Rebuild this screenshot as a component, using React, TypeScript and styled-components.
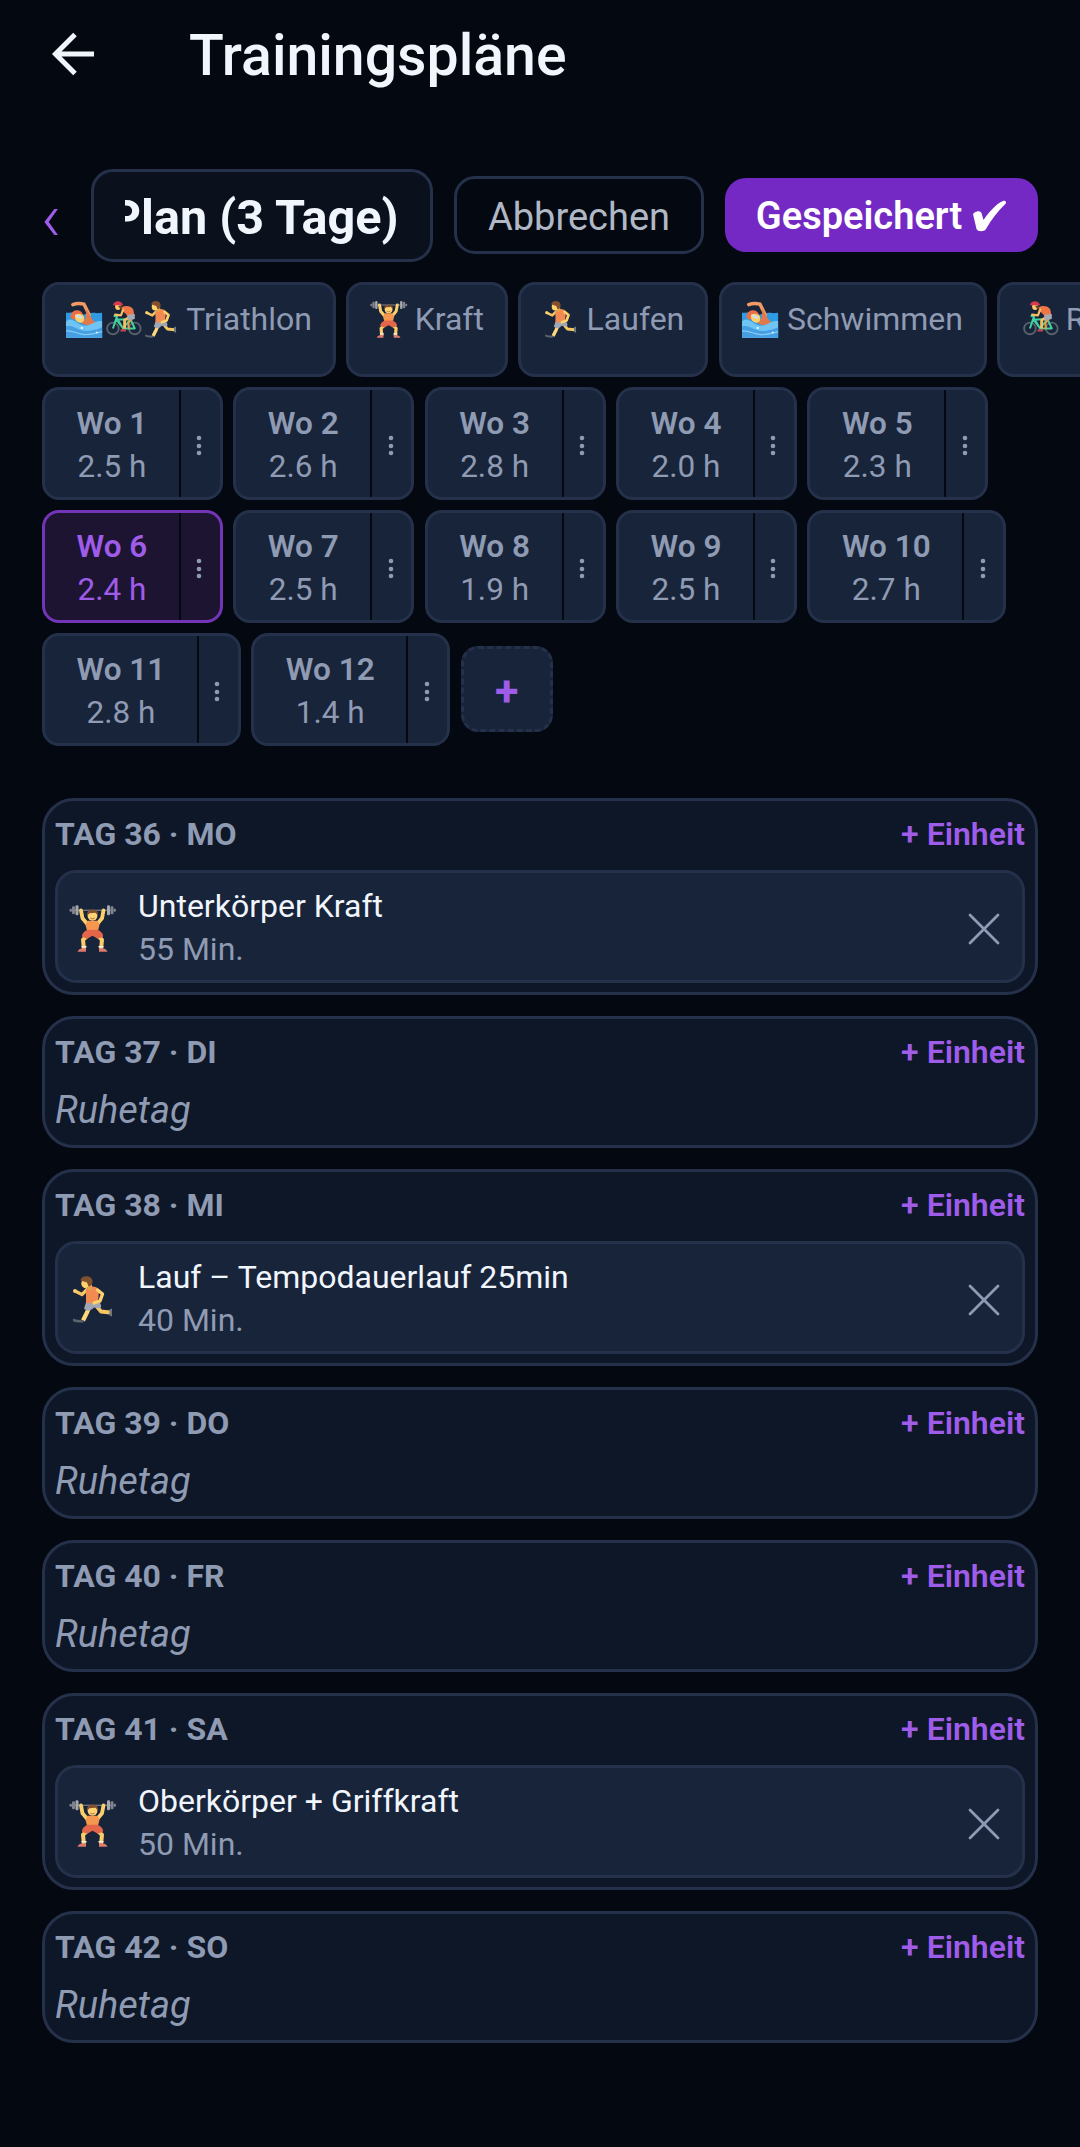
import React from "react";
import styled, { createGlobalStyle } from "styled-components";

const color = {
  page: "#040810",
  panel: "#0d1727",
  raised: "#18243a",
  line: "#25314a",
  muted: "#8f9ab3",
  text: "#f1f5fc",
  accent: "#9f5ce9",
  primary: "#7429c4",
};

const GlobalStyle = createGlobalStyle`
  *, *::before, *::after { box-sizing: border-box; }
  html, body { margin: 0; background: ${color.page}; }
  body { font-family: Roboto, "Noto Sans", sans-serif; color: ${color.text}; overflow-x: hidden; }
  button { font: inherit; color: inherit; margin: 0; padding: 0; border: 0; background: none; }
`;

const Screen = styled.main`
  width: 1080px;
  height: 2147px;
  overflow: hidden;
  background: ${color.page};
`;

const AppBar = styled.header`
  display: flex;
  align-items: center;
  height: 112px;
  padding-left: 51px;
`;

const BackButton = styled.button`
  display: flex;
  width: 44px;
  height: 44px;
  margin: 0 94px 4px 0;
`;

const Title = styled.h1`
  margin: 0;
  font-size: 57.2px;
  font-weight: 500;
  line-height: 66px;
`;

const Content = styled.div`
  display: flex;
  flex-direction: column;
  padding: 57px 42px 0;
`;

const EditBar = styled.div`
  display: flex;
  align-items: center;
  gap: 21px;
  height: 93px;
`;

const PrevButton = styled.button`
  width: 28px;
  height: 62px;
  padding: 4px 12px 0 0;
  font-size: 68px;
  font-weight: 300;
  line-height: 58px;
  text-indent: -1px;
  color: ${color.accent};
  text-align: left;
`;

const NameField = styled.div`
  display: flex;
  flex: none;
  width: 342px;
  height: 93px;
  padding: 0 31.5px 0 30.5px;
  border: 3px solid ${color.line};
  border-radius: 22px;
  background: #0a101c;
`;

const NameText = styled.div`
  display: flex;
  justify-content: flex-end;
  width: 100%;
  overflow: hidden;
  white-space: nowrap;
  font-size: 48.6px;
  font-weight: 700;
  line-height: 91px;
`;

const ActionButton = styled.button<{ $primary?: boolean }>`
  display: flex;
  align-items: center;
  justify-content: center;
  flex: none;
  gap: 10px;
  width: ${(p) => (p.$primary ? 313 : 250)}px;
  height: ${(p) => (p.$primary ? 74 : 78)}px;
  margin-bottom: 2px;
  padding-top: ${(p) => (p.$primary ? 3 : 5)}px;
  border: ${(p) => (p.$primary ? "0" : `3px solid ${color.line}`)};
  border-radius: 21px;
  background: ${(p) => (p.$primary ? color.primary : "transparent")};
  color: ${(p) => (p.$primary ? "#fff" : "#b0b8c6")};
  font-size: 38px;
  font-weight: ${(p) => (p.$primary ? 600 : 400)};
  white-space: nowrap;
`;

const SportStrip = styled.div`
  display: flex;
  gap: 10.5px;
  height: 95px;
  margin: 20px -42px 10px 0;
  overflow: hidden;
`;

const SportChip = styled.button`
  display: flex;
  flex: none;
  align-items: flex-start;
  padding: 15px 21px 15px 20.5px;
  border: 3px solid ${color.line};
  border-radius: 17px;
  background: ${color.raised};
  color: ${color.muted};
  font-size: 32px;
  line-height: 38px;
`;

const ChipLabel = styled.span`
  margin-left: 6.7px;
`;

const Emoji = styled.svg<{ $size: number }>`
  flex: none;
  width: ${(p) => p.$size}px;
  height: ${(p) => p.$size}px;
`;

const WeekGrid = styled.div`
  display: flex;
  flex-wrap: wrap;
  align-items: center;
  gap: 10.5px;
`;

const WeekTile = styled.div<{ $active?: boolean }>`
  display: flex;
  height: 112.5px;
  border: 3px solid ${(p) => (p.$active ? "#7434b8" : color.line)};
  border-radius: 17px;
  background: ${(p) => (p.$active ? "#1d1431" : color.raised)};
  color: ${(p) => (p.$active ? color.accent : color.muted)};
`;

const WeekInfo = styled.div`
  display: flex;
  flex-direction: column;
  align-items: center;
  padding: 11.5px 31.5px 0;
  font-size: 31.5px;
  line-height: 43px;
`;

const WeekName = styled.strong`
  font-weight: 600;
`;

const WeekMenu = styled.button`
  display: flex;
  align-items: center;
  justify-content: center;
  width: 41px;
  padding: 3px 2px 0 0;
  border-left: 2px solid ${color.page};
`;

const AddWeek = styled.button`
  width: 92px;
  height: 86px;
  padding-top: 5px;
  border: 3px dashed ${color.line};
  border-radius: 17px;
  background: ${color.raised};
  color: ${color.accent};
  font-size: 43px;
  font-weight: 700;
  line-height: 75px;
`;

const DayList = styled.section`
  display: flex;
  flex-direction: column;
  gap: 21.5px;
  margin-top: 52.500px;
`;

const DayCard = styled.article<{ $rest?: boolean }>`
  height: ${(p) => (p.$rest ? 131.5 : 196.5)}px;
  padding: 10px;
  border: 3px solid ${color.line};
  border-radius: 32px;
  background: ${color.panel};
`;

const DayHead = styled.div`
  display: flex;
  justify-content: space-between;
  height: 59px;
  font-size: 32px;
  line-height: 47px;
`;

const DayName = styled.h2`
  margin: 0;
  font-size: inherit;
  font-weight: 700;
  color: ${color.muted};
`;

const AddUnit = styled.button`
  align-self: flex-start;
  font-weight: 600;
  color: ${color.accent};
`;

const RestLabel = styled.p`
  margin: 0;
  font-size: 38px;
  font-style: italic;
  line-height: 44px;
  color: ${color.muted};
`;

const Workout = styled.div`
  display: flex;
  align-items: center;
  height: 113px;
  padding: 2px 22px 0 11px;
  border: 3px solid ${color.line};
  border-radius: 21px;
  background: ${color.raised};
`;

const WorkoutText = styled.div`
  flex: 1;
  margin-left: 21px;
  font-size: 32px;
  line-height: 43px;
  color: ${color.text};
`;

const Duration = styled.div`
  color: ${color.muted};
`;

const RemoveButton = styled.button`
  display: flex;
  padding-top: 3px;
`;

type Sport = "swim" | "bike" | "run" | "lift";

const Swimmer = () => (
  <g transform="translate(0 2) scale(0.95)">
    <path d="M0 15c4 0 7-1 11 0s8 3 14 2 8-3 13-2 7 0 10 0v33H0z" fill="#2f9be2" />
    <path d="M9 4c5-2 10-2 15-.5L31 18" fill="none" stroke="#f29a62" strokeWidth="4.600" strokeLinejoin="round" strokeLinecap="round" />
    <path d="M27 10l9 15 5 3-9 4-12-3 6-7z" fill="#e07a4c" />
    <path d="M6 21c0-6 4-10 9-9.500 5 .3 8 4 8 9L9 24z" fill="#ea6e47" />
    <path d="M12 18c4-3 9-2 12 2 1 5-1 8-5 8-5 0-8-4-7-10z" fill="#ffd06a" />
    <path d="M13 17l9 3-1 3-8-3z" fill="#c8e2ef" />
    <path d="M0 26c6-4 9-2 15 2s12 5 18 2 9-5 15-4v22H0z" fill="#6fc4f3" />
    <path d="M0 33c8-2 13 3 20 5s17 1 28-4v14H0z" fill="#459fe2" />
    <path d="M0 39c9-1 17 5 25 5s16-2 23-4" stroke="#86cdf5" strokeWidth="1.500" fill="none" />
    <circle cx="21" cy="35" r="1.600" fill="#e5f7ff" />
    <circle cx="41" cy="41" r="1.300" fill="#e5f7ff" />
  </g>
);

const Cyclist = () => (
  <g transform="translate(3 1) scale(0.92)">
    <g fill="none" stroke="#59616b" strokeWidth="2.600">
      <circle cx="9" cy="38" r="8" />
      <circle cx="39" cy="38" r="8" />
    </g>
    <path d="M9 38l5-15 9 15 10-13 6 13H23L14 26l19-1M10 21h6" fill="none" stroke="#3fd3a2" strokeWidth="2.700" strokeLinejoin="round" />
    <path d="M33 22l-8 4.500L25 38" fill="none" stroke="#f7c05e" strokeWidth="3.800" strokeLinejoin="round" />
    <path d="M35 24l-5 7 1 8" fill="none" stroke="#e3a04b" strokeWidth="3" />
    <path d="M20 39h7v3h-8z" fill="#c9434c" />
    <path d="M21 9c5-3 13-2 16 3l1.500 9-9 2c-1-4-4-7-8.500-9z" fill="#ee7748" />
    <path d="M29 19l10-1v7l-10 2z" fill="#a6aab5" />
    <path d="M23 12l-3 8-8-1" fill="none" stroke="#f8bd63" strokeWidth="3" strokeLinejoin="round" strokeLinecap="round" />
    <ellipse cx="16" cy="8" rx="4" ry="4.600" fill="#ffc968" />
    <path d="M16 7l5-1 1 6-3-1z" fill="#6b432b" />
    <path d="M9 6C10-1 21-1.500 23 6z" fill="#d6384f" />
  </g>
);

const Runner = () => (
  <g transform="translate(0 0.5)">
    <path d="M27 30l5 6 9 1" fill="none" stroke="#f6c665" strokeWidth="3.800" strokeLinejoin="round" />
    <path d="M40.500 34l2.500-1v8l-2.500-1z" fill="#6f7783" />
    <path d="M21 30l-3 7-4 8" fill="none" stroke="#ffd878" strokeWidth="4.200" strokeLinejoin="round" />
    <path d="M17 27l13-1c2.500 3 2.500 5 1.500 7l-6.500-1c-4 4-7 4-10 1z" fill="#a0a5b3" />
    <path d="M4 43l3 1 8 1-1 2c-5 .2-8-.6-10-1.300z" fill="#5c6470" />
    <path d="M19 13l-6 6-6-3" fill="none" stroke="#f6c463" strokeWidth="3.200" strokeLinejoin="round" />
    <path d="M17 14c3-4 10-4 13 0l-1 14-12-.5z" fill="#f28b52" />
    <path d="M28.500 14.500l5 4-2.500 7-6 2" fill="none" stroke="#ffd06e" strokeWidth="3.400" strokeLinejoin="round" strokeLinecap="round" />
    <circle cx="6" cy="15.500" r="2" fill="#ffd06e" />
    <path d="M18 10l5-1v5l-4 1z" fill="#e4a44c" />
    <ellipse cx="16.500" cy="8" rx="4.200" ry="4.700" fill="#ffd06e" />
    <path d="M11.500 5C12-.5 22.500-1 23.500 5c.3 4-2 6-4 6L18 7z" fill="#80512f" />
  </g>
);

const Lifter = () => (
  <g transform="translate(0.5 0.800)">
    <path d="M5 5.500h37" stroke="#8d929b" strokeWidth="1.100" />
    <g fill="#7f838c">
      <rect x="0" y="4" width="2.500" height="3" rx="1" />
      <rect x="2.500" y="1.500" width="3" height="8" rx="1.200" />
      <rect x="6" y="0.500" width="3" height="10" rx="1.200" fill="#a5a8af" />
      <rect x="37.500" y="0.500" width="3" height="10" rx="1.200" fill="#a5a8af" />
      <rect x="41" y="1.500" width="3" height="8" rx="1.200" />
      <rect x="44" y="4" width="2.500" height="3" rx="1" />
    </g>
    <path d="M11.500 5.500l1.500 8 5 6M34 5.500l-1.500 8-5 6" fill="none" stroke="#fbd06c" strokeWidth="3.800" strokeLinejoin="round" strokeLinecap="round" />
    <path d="M18 31l-4.500 4 1 10M28 31l4.500 4-1 10" fill="none" stroke="#fbcd68" strokeWidth="4" strokeLinejoin="round" />
    <path d="M18 16h10l2 4-2 8H18l-2-8z" fill="#f5974f" />
    <path d="M18 25h10c4 2 6 4 5.500 7l-5 2-5.500-3-5.500 3-5-2c0-3 1.500-5 5.500-7z" fill="#e4664a" />
    <path d="M12 42h5M29 42h5" stroke="#f4efe9" strokeWidth="1.500" />
    <path d="M8 47c1-3 4-4 8.500-3.500V47zM38 47c-1-3-4-4-8.500-3.500V47z" fill="#de7a6b" />
    <circle cx="23" cy="11" r="4.900" fill="#ffd273" />
    <path d="M17.500 11C16 3 30 2.500 28.500 11L26 8l-6 .5z" fill="#80512f" />
    <path d="M20.800 13.300q2.200 1.700 4.400 0" fill="none" stroke="#b5652f" strokeWidth="0.900" />
  </g>
);

const drawings: Record<Sport, React.FC> = { swim: Swimmer, bike: Cyclist, run: Runner, lift: Lifter };

function SportIcon({ sport, size }: { sport: Sport; size: number }) {
  const Drawing = drawings[sport];
  return (
    <Emoji $size={size} viewBox="0 0 48 48" aria-hidden="true">
      <Drawing />
    </Emoji>
  );
}

const sports: { icons: Sport[]; label: string }[] = [
  { icons: ["swim", "bike", "run"], label: "Triathlon" },
  { icons: ["lift"], label: "Kraft" },
  { icons: ["run"], label: "Laufen" },
  { icons: ["swim"], label: "Schwimmen" },
  { icons: ["bike"], label: "Rad" },
];

const weekHours = ["2.5", "2.6", "2.8", "2.0", "2.3", "2.4", "2.5", "1.9", "2.5", "2.7", "2.8", "1.4"];
const activeWeek = 6;

type Day = { number: number; weekday: string; workout?: { sport: Sport; name: string; minutes: number } };

const days: Day[] = [
  { number: 36, weekday: "MO", workout: { sport: "lift", name: "Unterkörper Kraft", minutes: 55 } },
  { number: 37, weekday: "DI" },
  { number: 38, weekday: "MI", workout: { sport: "run", name: "Lauf – Tempodauerlauf 25min", minutes: 40 } },
  { number: 39, weekday: "DO" },
  { number: 40, weekday: "FR" },
  { number: 41, weekday: "SA", workout: { sport: "lift", name: "Oberkörper + Griffkraft", minutes: 50 } },
  { number: 42, weekday: "SO" },
];

export default function App() {
  return (
    <Screen>
      <GlobalStyle />
      <AppBar>
        <BackButton aria-label="Zurück">
          <svg width="44" height="44" viewBox="0 0 44 44" fill="none" stroke={color.text} strokeWidth="5">
            <path d="M43 22H5M24 2.500L4.500 22 24 41.500" />
          </svg>
        </BackButton>
        <Title>Trainingspläne</Title>
      </AppBar>
      <Content>
        <EditBar>
          <PrevButton>‹</PrevButton>
          <NameField>
            <NameText>Plan (3 Tage)</NameText>
          </NameField>
          <ActionButton>Abbrechen</ActionButton>
          <ActionButton $primary>
            Gespeichert
            <svg width="35" height="32" viewBox="0 0 35 32" fill="#fff">
              <path d="M1 14c2-3 7-4 8.500-1l2 7C17 12 24 4 31 1c2-.8 4 .8 2.500 2.800C26 11 19 20 14 29c-1.500 2.800-8 3.200-9.500 0z" />
            </svg>
          </ActionButton>
        </EditBar>
        <SportStrip>
          {sports.map(({ icons, label }) => (
            <SportChip key={label}>
              {icons.map((sport) => (
                <SportIcon key={sport} sport={sport} size={38} />
              ))}
              <ChipLabel>{label}</ChipLabel>
            </SportChip>
          ))}
        </SportStrip>
        <WeekGrid>
          {weekHours.map((hours, i) => (
            <WeekTile key={i} $active={i + 1 === activeWeek}>
              <WeekInfo>
                <WeekName>Wo {i + 1}</WeekName>
                <span>{hours} h</span>
              </WeekInfo>
              <WeekMenu aria-label="Menü">
                <svg width="6" height="22" viewBox="0 0 6 22" fill={color.muted}>
                  <circle cx="3" cy="4" r="2.300" />
                  <circle cx="3" cy="12" r="2.300" />
                  <circle cx="3" cy="19" r="2.300" />
                </svg>
              </WeekMenu>
            </WeekTile>
          ))}
          <AddWeek>+</AddWeek>
        </WeekGrid>
        <DayList>
          {days.map(({ number, weekday, workout }) => (
            <DayCard key={number} $rest={!workout}>
              <DayHead>
                <DayName>
                  TAG {number} · {weekday}
                </DayName>
                <AddUnit>+ Einheit</AddUnit>
              </DayHead>
              {workout ? (
                <Workout>
                  <SportIcon sport={workout.sport} size={48} />
                  <WorkoutText>
                    {workout.name}
                    <Duration>{workout.minutes} Min.</Duration>
                  </WorkoutText>
                  <RemoveButton aria-label="Entfernen">
                    <svg width="32" height="32" viewBox="0 0 32 32" stroke={color.muted} strokeWidth="2.800" strokeLinecap="round">
                      <path d="M2 2l28 28M30 2L2 30" />
                    </svg>
                  </RemoveButton>
                </Workout>
              ) : (
                <RestLabel>Ruhetag</RestLabel>
              )}
            </DayCard>
          ))}
        </DayList>
      </Content>
    </Screen>
  );
}
